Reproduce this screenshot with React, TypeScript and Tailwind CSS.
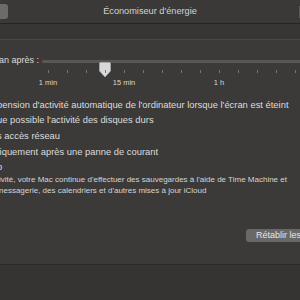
import React from 'react'

const ticks = Array.from({ length: 14 })

const Thumb = () => (
  <svg width="12" height="16" viewBox="0 0 12 16" className="-mt-[7px] ml-[56px]">
    <path d="M1.5 0.5 H10.5 Q11.5 0.5 11.5 1.5 V9 L6 15 L0.5 9 V1.5 Q0.5 0.5 1.5 0.5 Z" fill="#d9d9d9" stroke="#bdbdbd" strokeWidth="0.5" />
  </svg>
)

const App = () => {
  return (
    <div className="w-[300px] h-[300px] overflow-hidden bg-[#3c3a39] text-[#dcdcdc] font-['Liberation_Sans',sans-serif] flex flex-col">
      <div className="h-[24px] bg-[#3b3938] flex items-center justify-between border-b border-[#242322]">
        <div className="w-[8px] h-[15px] rounded-r-[3px] bg-[#6d6b6a]" />
        <span className="text-[9.2px] text-[#d2d2d2]">Économiseur d'énergie</span>
        <div className="w-[8px] flex justify-end">
          <div className="w-[1px] h-[12px] bg-[#5a5857]" />
        </div>
      </div>
      <div className="h-[16px] bg-[#383635] border-b border-[#4b4948]" />

      <div className="flex flex-col">
        <div className="flex items-center mt-[13px] h-[16px]">
          <span className="text-[9px] w-[43px] shrink-0 -ml-[1px] whitespace-nowrap">an après :</span>
          <div className="flex-1 flex flex-col">
            <div className="h-[3px] bg-[#595756] rounded-l" />
          </div>
        </div>
        <div className="h-0 overflow-visible flex">
          <div className="ml-[43px]"><Thumb /></div>
        </div>
        <div className="flex gap-[18px] ml-[48px] mt-[1px]">
          {ticks.map((_, i) => (
            <div key={i} className="w-[1px] h-[3px] bg-[#777574]" />
          ))}
        </div>
        <div className="flex text-[7.5px] text-[#d6d6d6] mt-[4px]">
          <span className="w-[38px] ml-[29px] text-center">1 min</span>
          <span className="w-[38px] ml-[38px] text-center">15 min</span>
          <span className="w-[38px] ml-[57px] text-center">1 h</span>
        </div>

        <div className="flex flex-col text-[9.4px] leading-[15px] -ml-[3px] mt-[9px] whitespace-nowrap">
          <span>pension d'activité automatique de l'ordinateur lorsque l'écran est éteint</span>
          <span>ue possible l'activité des disques durs</span>
          <span className="mt-[1px]">s accès réseau</span>
          <span className="mt-[1px]">tiquement après une panne de courant</span>
          <span>p</span>
        </div>
        <div className="flex flex-col text-[8px] leading-[11px] -ml-[1px] text-[#d4d4d4] whitespace-nowrap">
          <span>ivité, votre Mac continue d'effectuer des sauvegardes à l'aide de Time Machine et</span>
          <span>nessagerie, des calendriers et d'autres mises à jour iCloud</span>
        </div>
      </div>

      <div className="mt-auto flex justify-end mb-[22px]">
        <div className="h-[13px] w-[54px] pl-[10px] bg-[#6a6867] rounded-l-[3px] text-[9px] leading-[13px] text-[#e6e6e6] whitespace-nowrap overflow-hidden">
          Rétablir les
        </div>
      </div>
      <div className="h-[36px] shrink-0 bg-[#363433] border-t border-[#2b2a29]" />
    </div>
  )
}

export default App
